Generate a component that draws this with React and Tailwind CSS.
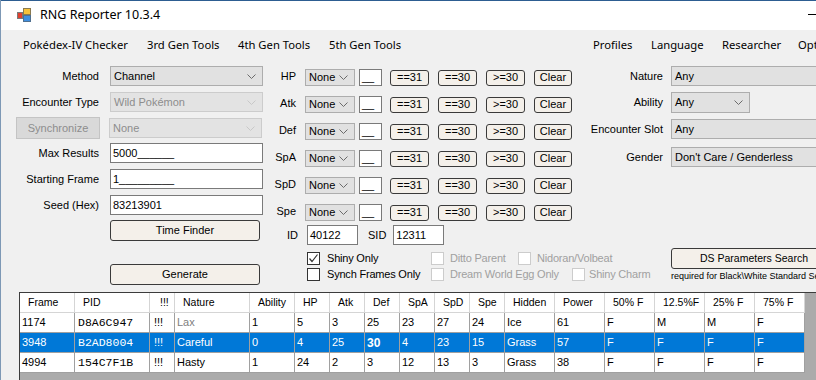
import React from "react";

const sans = "font-['Liberation_Sans',Arial,sans-serif]";
const ui = "font-['Noto_Sans',sans-serif]";
const mono = "font-['Liberation_Mono',monospace]";

function Chevron({ disabled }) {
  return (
    <svg width="9" height="5" viewBox="0 0 9 5" className="shrink-0">
      <polyline
        points="0.5,0.5 4.5,4.5 8.5,0.5"
        fill="none"
        stroke={disabled ? "#c8c8c8" : "#6b6b6b"}
        strokeWidth="1"
      />
    </svg>
  );
}

function Select({ text, className = "", disabled, chevron = true }) {
  return (
    <div
      className={`flex items-center justify-between border pl-[3px] pr-[6px] text-[11px] leading-none ${
        disabled
          ? "border-[#cccccc] bg-[#e3e3e3] text-[#8d8d8d]"
          : "border-[#adadad] bg-[#e1e1e1] text-black"
      } ${className}`}
    >
      <span className="whitespace-nowrap">{text}</span>
      {chevron && <Chevron disabled={disabled} />}
    </div>
  );
}

function Input({ text, className = "" }) {
  return (
    <div
      className={`flex items-center border border-[#7a7a7a] bg-white pl-[2px] text-[11px] leading-none text-black ${className}`}
    >
      <span className="whitespace-nowrap">{text}</span>
    </div>
  );
}

function Btn({ children, className = "", disabled }) {
  return (
    <div
      className={`flex items-center justify-center border leading-none whitespace-nowrap ${
        disabled
          ? "border-[#c4c4c4] bg-[#d9d9d9] text-[#8d8d8d]"
          : "rounded-[3px] border-[#3a3a3a] bg-[#f4f0ea] text-black"
      } ${className}`}
    >
      {children}
    </div>
  );
}

function Check({ checked, disabled, label, className = "", gap = "ml-[7px]" }) {
  return (
    <div className={`flex items-center ${className}`}>
      <div
        className={`flex h-[13px] w-[13px] shrink-0 items-center justify-center border bg-white ${
          disabled ? "border-[#cccccc]" : "border-[#333333]"
        }`}
      >
        {checked && (
          <svg width="11" height="11" viewBox="0 0 11 11">
            <polyline points="1.5,5.5 4,8.5 9.5,1.5" fill="none" stroke="#333" strokeWidth="1.2" />
          </svg>
        )}
      </div>
      <span
        className={`${gap} whitespace-nowrap text-[11px] leading-none tracking-[-0.2px] ${
          disabled ? "text-[#a0a0a0]" : "text-black"
        }`}
      >
        {label}
      </span>
    </div>
  );
}

function LeftRow({ label, children, className = "" }) {
  return (
    <div className={`flex items-center ${className}`}>
      <div className="w-[98px] text-right text-[11px] leading-none">{label}</div>
      <div className="ml-[11px]">{children}</div>
    </div>
  );
}

function IVRow({ label, className = "" }) {
  return (
    <div className={`flex h-[17px] items-center ${className}`}>
      <div className="w-[26px] -translate-y-[1px] text-right text-[11px] leading-none">{label}</div>
      <Select text="None" className="ml-[9px] h-[17px] w-[50px]" />
      <Input text="__" className="ml-[4px] h-[17px] w-[23px]" />
      <Btn className="ml-[8px] h-[16px] w-[39px] text-[11px]">==31</Btn>
      <Btn className="ml-[9px] h-[16px] w-[39px] text-[11px]">==30</Btn>
      <Btn className="ml-[9px] h-[16px] w-[39px] text-[11px]">&gt;=30</Btn>
      <Btn className="ml-[9px] h-[16px] w-[38px] text-[11px]">Clear</Btn>
    </div>
  );
}

function RightRow({ label, children, className = "" }) {
  return (
    <div className={`flex items-center ${className}`}>
      <div className="w-[82px] text-right text-[11px] leading-none">{label}</div>
      <div className="ml-[8px]">{children}</div>
    </div>
  );
}

const cols = [
  "Frame", "PID", "!!!", "Nature", "Ability", "HP", "Atk", "Def", "SpA", "SpD", "Spe",
  "Hidden", "Power", "50% F", "12.5%F", "25% F", "75% F",
];

const rows = [
  { sel: false, cells: ["1174", "D8A6C947", "!!!", "Lax", "1", "5", "3", "25", "23", "27", "24", "Ice", "61", "F", "M", "M", "F"] },
  { sel: true, cells: ["3948", "B2AD8004", "!!!", "Careful", "0", "4", "25", "30", "4", "23", "15", "Grass", "57", "F", "F", "F", "F"] },
  { sel: false, cells: ["4994", "154C7F1B", "!!!", "Hasty", "1", "24", "2", "3", "12", "13", "3", "Grass", "38", "F", "F", "F", "F"] },
];

const gridCols =
  "grid grid-cols-[55px_75px_25px_75px_45px_35px_35px_35px_35px_35px_35px_50px_50px_50px_50px_50px_50px]";

function AppIcon() {
  return (
    <svg width="14" height="14" viewBox="0 0 14 14">
      <rect x="0.5" y="4.5" width="5" height="6" fill="#e04030" stroke="#7a7a7a" />
      <rect x="6.5" y="0.5" width="7" height="6" fill="#f7c23a" stroke="#8a7a50" />
      <rect x="6.5" y="7.5" width="7" height="6" fill="#3f8fe0" stroke="#50708f" />
    </svg>
  );
}

export default function App() {
  return (
    <div className={`h-[380px] w-[816px] overflow-hidden bg-[#f0f0f0] ${sans} text-black`}>
      <div className="flex h-full w-[900px] flex-col border-l border-[#7d98b5]">
        {/* Title bar */}
        <div className="flex h-[30px] shrink-0 items-center border-t border-[#2d5d91] bg-white">
          <div className="flex w-[807px] items-center">
            <div className="ml-[16px] -mt-[1px]">
              <AppIcon />
            </div>
            <div className={`ml-[9px] ${ui} text-[12.5px] leading-none`}>RNG Reporter 10.3.4</div>
          </div>
          <div className="-mt-[3px] h-px w-[10px] bg-black" />
        </div>

        {/* Menu bar */}
        <div className={`flex h-[30px] shrink-0 items-center ${ui} text-[11.25px] leading-none`}>
          <div className="ml-[22px] w-[124px]">Pokédex-IV Checker</div>
          <div className="w-[91px]">3rd Gen Tools</div>
          <div className="w-[91px]">4th Gen Tools</div>
          <div className="w-[264px]">5th Gen Tools</div>
          <div className="w-[58px]">Profiles</div>
          <div className="w-[71px]">Language</div>
          <div className="w-[76px]">Researcher</div>
          <div>Options</div>
        </div>

        {/* Body */}
        <div className="flex h-[232px] shrink-0">
          {/* Left column */}
          <div className="flex w-[269px] shrink-0 flex-col pt-[6px]">
            <LeftRow label="Method">
              <Select text="Channel" className="h-[20px] w-[153px]" />
            </LeftRow>
            <LeftRow label="Encounter Type" className="mt-[6px]">
              <Select text="Wild Pokémon" disabled className="h-[20px] w-[153px]" />
            </LeftRow>
            <div className="mt-[5px] flex h-[22px] items-center">
              <Btn disabled className="ml-[15px] h-[22px] w-[84px] text-[11px]">Synchronize</Btn>
              <Select text="None" disabled className="ml-[9px] h-[20px] w-[153px]" />
            </div>
            <LeftRow label="Max Results" className="mt-[4px]">
              <Input text="5000______" className="h-[20px] w-[153px]" />
            </LeftRow>
            <LeftRow label="Starting Frame" className="mt-[6px]">
              <Input text="1_________" className="h-[20px] w-[153px]" />
            </LeftRow>
            <LeftRow label="Seed (Hex)" className="mt-[6px]">
              <Input text="83213901" className="h-[20px] w-[153px]" />
            </LeftRow>
            <Btn className="ml-[109px] mt-[5px] h-[21px] w-[150px] text-[11px]">Time Finder</Btn>
            <Btn className="ml-[109px] mt-[23px] h-[21px] w-[150px] text-[11px]">Generate</Btn>
          </div>

          {/* Middle + right */}
          <div className="flex flex-col">
            <div className="flex h-[184px]">
              {/* IV block */}
              <div className="flex w-[311px] shrink-0 flex-col pt-[9px]">
                <IVRow label="HP" />
                <IVRow label="Atk" className="mt-[10px]" />
                <IVRow label="Def" className="mt-[10px]" />
                <IVRow label="SpA" className="mt-[10px]" />
                <IVRow label="SpD" className="mt-[10px]" />
                <IVRow label="Spe" className="mt-[10px]" />
                <div className="mt-[4px] flex h-[20px] items-center">
                  <div className="w-[28px] text-right text-[11px] leading-none">ID</div>
                  <Input text="40122" className="ml-[9px] h-[20px] w-[51px]" />
                  <div className="ml-[10px] text-[11px] leading-none">SID</div>
                  <Input text="12311" className="ml-[7px] h-[20px] w-[51px]" />
                </div>
              </div>
              {/* Right fields */}
              <div className="flex flex-col pt-[6px]">
                <RightRow label="Nature">
                  <Select text="Any" chevron={false} className="h-[20px] w-[160px]" />
                </RightRow>
                <RightRow label="Ability" className="mt-[6px]">
                  <Select text="Any" className="h-[21px] w-[79px]" />
                </RightRow>
                <RightRow label="Encounter Slot" className="mt-[6px]">
                  <Select text="Any" chevron={false} className="h-[20px] w-[160px]" />
                </RightRow>
                <RightRow label="Gender" className="mt-[8px]">
                  <Select text="Don't Care / Genderless" chevron={false} className="h-[20px] w-[160px]" />
                </RightRow>
              </div>
            </div>

            {/* Bottom row: checkboxes + DS */}
            <div className="flex">
              <div className="ml-[37px] flex w-[364px] shrink-0 flex-col pt-[8px]">
                <div className="flex h-[13px] items-center">
                  <Check checked label="Shiny Only" className="w-[124px]" />
                  <Check disabled label="Ditto Parent" gap="ml-[6px]" className="w-[87px]" />
                  <Check disabled label="Nidoran/Volbeat" gap="ml-[6px]" />
                </div>
                <div className="mt-[3px] flex h-[13px] items-center">
                  <Check label="Synch Frames Only" className="w-[124px]" />
                  <Check disabled label="Dream World Egg Only" gap="ml-[6px]" className="w-[141px]" />
                  <Check disabled label="Shiny Charm" gap="ml-[4px]" />
                </div>
              </div>
              <div className="flex flex-col pt-[4px]">
                <Btn className="h-[21px] w-[166px] text-[10.5px]">DS Parameters Search</Btn>
                <div className="mt-[3px] whitespace-nowrap text-[9px] leading-none">
                  required for Black\White Standard Seed Search
                </div>
              </div>
            </div>
          </div>
        </div>

        {/* Table */}
        <div className="ml-[18px] flex-1 border-l border-t border-[#3c3c3c] bg-[#ababab]">
          <div className="w-[785px] leading-none">
            <div className={`${gridCols} h-[20px] bg-white text-[10.5px]`}>
              {cols.map((c, i) => (
                <div
                  key={i}
                  className={`flex items-center border-b border-r border-[#d5d5d5] ${
                    i === 2 ? "pl-[10px]" : "pl-[8px]"
                  } whitespace-nowrap`}
                >
                  {c}
                </div>
              ))}
            </div>
            {rows.map((r, ri) => (
              <div
                key={ri}
                className={`${gridCols} h-[20px] text-[11px] ${r.sel ? "bg-[#0078d7] text-white" : "bg-white text-black"}`}
              >
                {r.cells.map((c, ci) => (
                  <div
                    key={ci}
                    className={`flex items-center whitespace-nowrap border-b border-r border-[#a0a0a0] ${
                      ci === 1 ? `${mono} pl-[3px] text-[11.5px]` : ci === 2 ? "pl-[4px]" : "pl-[2px]"
                    } ${ci === 3 && c === "Lax" ? "text-[#808080]" : ""} ${
                      r.sel && ci === 7 ? "font-bold text-[12px]" : ""
                    }`}
                  >
                    {c}
                  </div>
                ))}
              </div>
            ))}
          </div>
        </div>
      </div>
    </div>
  );
}
